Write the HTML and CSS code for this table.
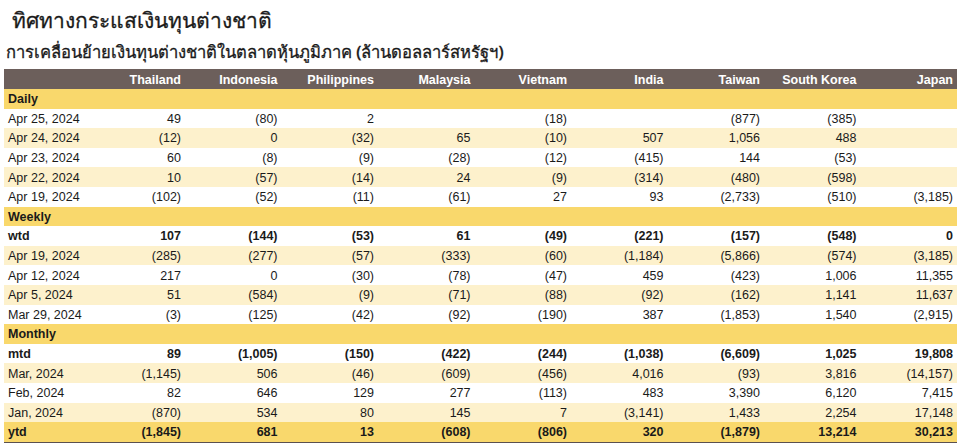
FILE: index.html
```html
<!DOCTYPE html>
<html lang="th">
<head>
<meta charset="utf-8">
<link rel="stylesheet" href="styles.css">
</head>
<body>
<div class="page">
  <h1 class="title">ทิศทางกระแสเงินทุนต่างชาติ</h1>
  <h2 class="subtitle">การเคลื่อนย้ายเงินทุนต่างชาติในตลาดหุ้นภูมิภาค (ล้านดอลลาร์สหรัฐฯ)</h2>
  <table class="flows">
    <colgroup>
      <col class="c-label">
      <col><col><col><col><col><col><col><col><col>
    </colgroup>
    <thead>
      <tr class="head">
        <th></th><th>Thailand</th><th>Indonesia</th><th>Philippines</th><th>Malaysia</th><th>Vietnam</th><th>India</th><th>Taiwan</th><th>South Korea</th><th>Japan</th>
      </tr>
    </thead>
    <tbody>
      <tr class="section"><td>Daily</td><td></td><td></td><td></td><td></td><td></td><td></td><td></td><td></td><td></td></tr>
      <tr><td>Apr 25, 2024</td><td>49</td><td>(80)</td><td>2</td><td></td><td>(18)</td><td></td><td>(877)</td><td>(385)</td><td></td></tr>
      <tr class="alt"><td>Apr 24, 2024</td><td>(12)</td><td>0</td><td>(32)</td><td>65</td><td>(10)</td><td>507</td><td>1,056</td><td>488</td><td></td></tr>
      <tr><td>Apr 23, 2024</td><td>60</td><td>(8)</td><td>(9)</td><td>(28)</td><td>(12)</td><td>(415)</td><td>144</td><td>(53)</td><td></td></tr>
      <tr class="alt"><td>Apr 22, 2024</td><td>10</td><td>(57)</td><td>(14)</td><td>24</td><td>(9)</td><td>(314)</td><td>(480)</td><td>(598)</td><td></td></tr>
      <tr><td>Apr 19, 2024</td><td>(102)</td><td>(52)</td><td>(11)</td><td>(61)</td><td>27</td><td>93</td><td>(2,733)</td><td>(510)</td><td>(3,185)</td></tr>
      <tr class="section"><td>Weekly</td><td></td><td></td><td></td><td></td><td></td><td></td><td></td><td></td><td></td></tr>
      <tr class="total"><td>wtd</td><td>107</td><td>(144)</td><td>(53)</td><td>61</td><td>(49)</td><td>(221)</td><td>(157)</td><td>(548)</td><td>0</td></tr>
      <tr class="alt"><td>Apr 19, 2024</td><td>(285)</td><td>(277)</td><td>(57)</td><td>(333)</td><td>(60)</td><td>(1,184)</td><td>(5,866)</td><td>(574)</td><td>(3,185)</td></tr>
      <tr><td>Apr 12, 2024</td><td>217</td><td>0</td><td>(30)</td><td>(78)</td><td>(47)</td><td>459</td><td>(423)</td><td>1,006</td><td>11,355</td></tr>
      <tr class="alt"><td>Apr 5, 2024</td><td>51</td><td>(584)</td><td>(9)</td><td>(71)</td><td>(88)</td><td>(92)</td><td>(162)</td><td>1,141</td><td>11,637</td></tr>
      <tr><td>Mar 29, 2024</td><td>(3)</td><td>(125)</td><td>(42)</td><td>(92)</td><td>(190)</td><td>387</td><td>(1,853)</td><td>1,540</td><td>(2,915)</td></tr>
      <tr class="section"><td>Monthly</td><td></td><td></td><td></td><td></td><td></td><td></td><td></td><td></td><td></td></tr>
      <tr class="total"><td>mtd</td><td>89</td><td>(1,005)</td><td>(150)</td><td>(422)</td><td>(244)</td><td>(1,038)</td><td>(6,609)</td><td>1,025</td><td>19,808</td></tr>
      <tr class="alt"><td>Mar, 2024</td><td>(1,145)</td><td>506</td><td>(46)</td><td>(609)</td><td>(456)</td><td>4,016</td><td>(93)</td><td>3,816</td><td>(14,157)</td></tr>
      <tr><td>Feb, 2024</td><td>82</td><td>646</td><td>129</td><td>277</td><td>(113)</td><td>483</td><td>3,390</td><td>6,120</td><td>7,415</td></tr>
      <tr class="alt"><td>Jan, 2024</td><td>(870)</td><td>534</td><td>80</td><td>145</td><td>7</td><td>(3,141)</td><td>1,433</td><td>2,254</td><td>17,148</td></tr>
      <tr class="ytd"><td>ytd</td><td>(1,845)</td><td>681</td><td>13</td><td>(608)</td><td>(806)</td><td>320</td><td>(1,879)</td><td>13,214</td><td>30,213</td></tr>
    </tbody>
  </table>
</div>
</body>
</html>
```
FILE: styles.css
```css
html, body {
  margin: 0;
  padding: 0;
  background: #ffffff;
}
.page {
  width: 960px;
  height: 446px;
  overflow: hidden;
  font-family: "Liberation Sans", Arial, sans-serif;
  color: #1a1a1a;
}
.title {
  margin: 0;
  padding: 4px 0 0 12px;
  height: 33px;
  font-family: "Noto Sans", "DejaVu Sans", sans-serif;
  font-size: 21px;
  font-weight: 500;
  line-height: 33px;
  color: #1a1a1a;
  -webkit-text-stroke: 0.3px #1a1a1a;
}
.subtitle {
  margin: 0;
  padding: 0 0 0 6px;
  height: 32px;
  font-family: "Noto Sans", "DejaVu Sans", sans-serif;
  font-size: 16.6px;
  font-weight: 500;
  line-height: 30px;
  color: #1a1a1a;
  -webkit-text-stroke: 0.3px #1a1a1a;
}
.flows {
  margin-left: 4px;
  width: 953px;
  border-collapse: collapse;
  table-layout: fixed;
  font-size: 12.5px;
}
.c-label {
  width: 84.5px;
}
.flows th,
.flows td {
  padding: 0 4px;
  text-align: right;
  white-space: nowrap;
}
.flows th:first-child,
.flows td:first-child {
  text-align: left;
}
.head th {
  height: 19px;
  padding-top: 1px;
  background: #6c5f5b;
  color: #ffffff;
  font-weight: bold;
}
.flows tbody td {
  height: 18.6px;
  padding-top: 1px;
  line-height: 14px;
}
.section td {
  background: #f9d86c;
  font-weight: bold;
}
.alt td {
  background: #fdf1cc;
}
.total td {
  font-weight: bold;
}
.ytd td {
  background: #f9d86c;
  font-weight: bold;
  border-bottom: 1px solid #5a5050;
}
```
